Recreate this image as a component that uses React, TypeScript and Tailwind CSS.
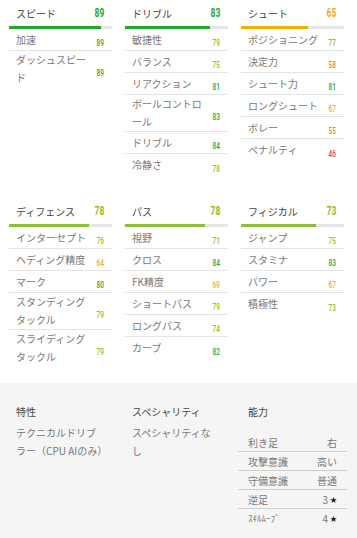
import React from "react";

type Stat = { label: string; value: number };
type Group = { title: string; value: number; stats: Stat[] };

const TOP: Group[] = [
  {
    title: "スピード",
    value: 89,
    stats: [
      { label: "加速", value: 89 },
      { label: "ダッシュスピード", value: 89 },
    ],
  },
  {
    title: "ドリブル",
    value: 83,
    stats: [
      { label: "敏捷性", value: 79 },
      { label: "バランス", value: 75 },
      { label: "リアクション", value: 81 },
      { label: "ボールコントロール", value: 83 },
      { label: "ドリブル", value: 84 },
      { label: "冷静さ", value: 78 },
    ],
  },
  {
    title: "シュート",
    value: 65,
    stats: [
      { label: "ポジショニング", value: 77 },
      { label: "決定力", value: 58 },
      { label: "シュート力", value: 81 },
      { label: "ロングシュート", value: 67 },
      { label: "ボレー", value: 55 },
      { label: "ペナルティ", value: 46 },
    ],
  },
];

const BOTTOM: Group[] = [
  {
    title: "ディフェンス",
    value: 78,
    stats: [
      { label: "インターセプト", value: 76 },
      { label: "ヘディング精度", value: 64 },
      { label: "マーク", value: 80 },
      { label: "スタンディングタックル", value: 79 },
      { label: "スライディングタックル", value: 79 },
    ],
  },
  {
    title: "パス",
    value: 78,
    stats: [
      { label: "視野", value: 71 },
      { label: "クロス", value: 84 },
      { label: "FK精度", value: 69 },
      { label: "ショートパス", value: 79 },
      { label: "ロングパス", value: 74 },
      { label: "カーブ", value: 82 },
    ],
  },
  {
    title: "フィジカル",
    value: 73,
    stats: [
      { label: "ジャンプ", value: 75 },
      { label: "スタミナ", value: 83 },
      { label: "パワー", value: 67 },
      { label: "積極性", value: 73 },
    ],
  },
];

const ABILITY = [
  { label: "利き足", value: "右" },
  { label: "攻撃意識", value: "高い" },
  { label: "守備意識", value: "普通" },
  { label: "逆足", value: "3", star: true },
  { label: "ｽｷﾙﾑｰﾌﾞ", value: "4", star: true },
];

function numColor(v: number) {
  if (v >= 80) return "text-[#22a83a]";
  if (v >= 70) return "text-[#8dbf2c]";
  if (v >= 60) return "text-[#f2ab1e]";
  if (v >= 50) return "text-[#e8822c]";
  return "text-[#d6405a]";
}

function barColor(v: number) {
  if (v >= 80) return "bg-[#1faa2a]";
  if (v >= 70) return "bg-[#8cbf34]";
  return "bg-[#f2b000]";
}

function Num({ v, big }: { v: number; big?: boolean }) {
  return (
    <span
      className={`inline-block origin-right scale-x-[0.68] font-['Roboto',sans-serif] ${
        big ? "text-[12.5px] font-bold" : "text-[9.5px] font-medium"
      } ${numColor(v)}`}
    >
      {v}
    </span>
  );
}

function StatColumn({ group }: { group: Group }) {
  return (
    <div>
      <div className="flex h-[26px] items-center justify-between pl-[7px] pr-[8px]">
        <span className="text-[10px] text-[#444]">{group.title}</span>
        <Num v={group.value} big />
      </div>
      <div className="h-[3px] bg-[#e6e6e6]">
        <div className={`h-full ${barColor(group.value)}`} style={{ width: `${group.value}%` }} />
      </div>
      {group.stats.map((s) => (
        <div
          key={s.label}
          className="flex min-h-[22px] items-center gap-1 border-b border-[#e4e4e4] pl-[7px] pr-[8px] last:border-b-0"
        >
          <span className="flex-1 text-[10px] leading-[18px] text-[#777]">{s.label}</span>
          <span className="w-[12px] text-right leading-none">
            <Num v={s.value} />
          </span>
        </div>
      ))}
    </div>
  );
}

export default function App() {
  return (
    <div className="w-[357px] bg-white font-['Noto_Sans_CJK_JP','Noto_Sans',sans-serif]">
      <div className="grid grid-cols-3 gap-x-[13px] pl-[9px] pr-[13px]">
        {TOP.map((g) => (
          <StatColumn key={g.title} group={g} />
        ))}
      </div>
      <div className="mt-[22px] grid grid-cols-3 gap-x-[13px] pl-[9px] pr-[13px]">
        {BOTTOM.map((g) => (
          <StatColumn key={g.title} group={g} />
        ))}
      </div>

      <div className="mt-[17px] grid grid-cols-3 gap-x-[13px] bg-[#f5f5f5] pb-6 pl-[9px] pr-[13px] pt-[20px]">
        <div className="pl-[7px] pr-[9px]">
          <div className="text-[10px] leading-[18px] text-[#444]">特性</div>
          <div className="mt-[3px] text-[10px] leading-[18px] text-[#777]">テクニカルドリブラー（CPU AIのみ）</div>
        </div>
        <div className="pl-[7px] pr-[12px]">
          <div className="text-[10px] leading-[18px] text-[#444]">スペシャリティ</div>
          <div className="mt-[3px] text-[10px] leading-[18px] text-[#777]">スペシャリティなし</div>
        </div>
        <div>
          <div className="px-[7px] text-[10px] leading-[18px] text-[#444]">能力</div>
          <div className="-mx-[3px] mt-[12px]">
            {ABILITY.map((a) => (
              <div
                key={a.label}
                className="flex h-[19px] items-center justify-between border-b border-[#cfcfcf] px-[10px] text-[10px] text-[#777] last:border-b-0"
              >
                <span className={a.label.startsWith("ｽ") ? "text-[9px]" : ""}>{a.label}</span>
                <span className="flex items-center gap-[2px]">
                  {a.value}
                  {a.star && <span className="text-[7px] text-[#222]">★</span>}
                </span>
              </div>
            ))}
          </div>
        </div>
      </div>
    </div>
  );
}
